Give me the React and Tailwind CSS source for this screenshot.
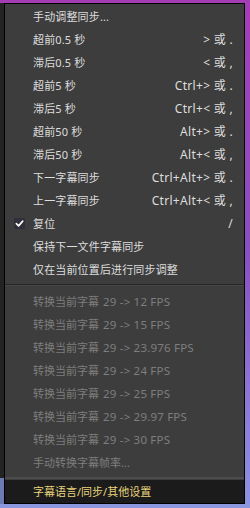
import React from "react";

const font = { fontFamily: '"Noto Sans", "Noto Sans CJK SC", sans-serif' };

const group1 = [
  ["手动调整同步...", ""],
  ["超前0.5 秒", "> 或 ."],
  ["滞后0.5 秒", "< 或 ,"],
  ["超前5 秒", "Ctrl+> 或 ."],
  ["滞后5 秒", "Ctrl+< 或 ,"],
  ["超前50 秒", "Alt+> 或 ."],
  ["滞后50 秒", "Alt+< 或 ,"],
  ["下一字幕同步", "Ctrl+Alt+> 或 ."],
  ["上一字幕同步", "Ctrl+Alt+< 或 ,"],
  ["复位", "/", true],
  ["保持下一文件字幕同步", ""],
  ["仅在当前位置后进行同步调整", ""],
];

const group2 = [
  ["转换当前字幕", "29 -> 12 FPS"],
  ["转换当前字幕", "29 -> 15 FPS"],
  ["转换当前字幕", "29 -> 23.976 FPS"],
  ["转换当前字幕", "29 -> 24 FPS"],
  ["转换当前字幕", "29 -> 25 FPS"],
  ["转换当前字幕", "29 -> 29.97 FPS"],
  ["转换当前字幕", "29 -> 30 FPS"],
  ["手动转换字幕帧率...", ""],
];

function Check() {
  return (
    <div className="absolute left-[9px] top-[6px] w-[11px] h-[11px] bg-[#30303a] flex items-center justify-center">
      <svg width="9" height="9" viewBox="0 0 10 10">
        <path d="M1.5 5.2 L4 7.6 L8.6 2.4" stroke="#ffffff" strokeWidth="1.8" fill="none" strokeLinecap="round" strokeLinejoin="round" />
      </svg>
    </div>
  );
}

export default function App() {
  return (
    <div className="w-[250px] h-[508px] flex flex-col bg-[#1e1e1e] overflow-hidden" style={font}>
      <div className="h-[3px] bg-[#a33db4]" />
      <div className="flex flex-1 min-h-0">
        <div className="w-[4px] flex flex-col">
          <div className="flex-1 bg-[#232323]" />
          <div className="h-[26px] bg-[#6c7bb4]" />
        </div>
        <div className="flex-1 flex flex-col bg-[#3d3d3d] border border-black">
          <div className="h-[1px]" />
          {group1.map(([label, sc, checked], i) => (
            <div key={i} className="relative h-[23px] flex items-center pl-[28px] pr-[11px] text-[11px] text-[#dedede] leading-none">
              {checked && <Check />}
              <span className="flex-1 whitespace-nowrap tracking-[0.15px]">{label}</span>
              <span className="whitespace-nowrap text-[12px] tracking-[0.3px]">{sc}</span>
            </div>
          ))}
          <div className="h-[9px] flex flex-col pt-[3px]">
            <div className="h-[1px] bg-[#262626]" />
            <div className="h-[1px] bg-[#474747]" />
          </div>
          {group2.map(([cjk, latin], i) => (
            <div key={i} className="h-[23px] flex items-center pl-[28px] pr-[11px] text-[11px] text-[#7e7e7e] leading-none whitespace-nowrap">
              <span>{cjk}</span>
              {latin && <span className="ml-[4px] text-[11.5px] tracking-[0.2px]">{latin}</span>}
            </div>
          ))}
          <div className="h-[6px] flex flex-col pt-[3px]">
            <div className="h-[2px] bg-[#4c4c4c]" />
          </div>
          <div className="h-[23px] flex items-center pl-[28px] bg-[#1b1b1b] text-[11px] text-[#e9d47c] leading-none whitespace-nowrap">
            字幕语言/同步/其他设置
          </div>
        </div>
        <div className="w-[5px] bg-gradient-to-b from-[#a63cb7] via-[#8a4fc0] to-[#8b93e2]" />
      </div>
      <div className="h-[4px] bg-[#8b98e0]" />
    </div>
  );
}
